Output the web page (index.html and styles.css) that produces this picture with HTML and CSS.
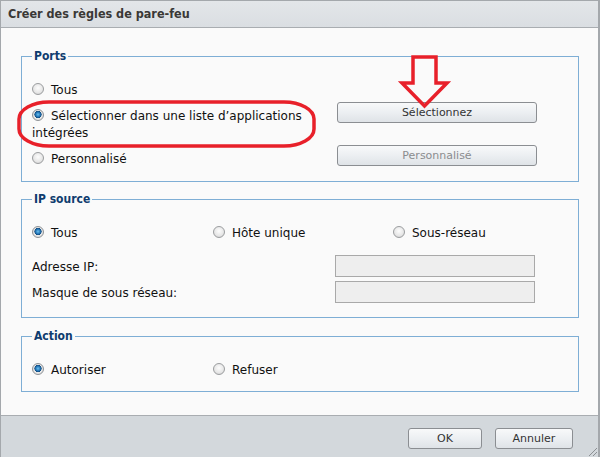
FILE: index.html
```html
<!DOCTYPE html>
<html lang="fr">
<head>
  <meta charset="UTF-8">
  <title>Créer des règles de pare-feu</title>
  <link rel="stylesheet" href="styles.css">
</head>
<body>
  <div class="dialog">
    <div class="titlebar">Créer des règles de pare-feu</div>

    <div class="content">
      <fieldset class="group ports">
        <legend>Ports</legend>
        <div class="row">
          <label class="opt"><span class="radio"></span>Tous</label>
        </div>
        <div class="row split">
          <label class="opt wide"><span class="radio on"></span>Sélectionner dans une liste d’applications intégrées</label>
          <button class="btn wide-btn">Sélectionnez</button>
        </div>
        <div class="row split">
          <label class="opt wide"><span class="radio"></span>Personnalisé</label>
          <button class="btn wide-btn" disabled>Personnalisé</button>
        </div>
      </fieldset>

      <fieldset class="group ipsrc">
        <legend>IP source</legend>
        <div class="row choices">
          <label class="opt"><span class="radio on"></span>Tous</label>
          <label class="opt"><span class="radio"></span>Hôte unique</label>
          <label class="opt"><span class="radio"></span>Sous-réseau</label>
        </div>
        <div class="field first">
          <span class="field-label">Adresse IP:</span>
          <input class="text" type="text" disabled>
        </div>
        <div class="field">
          <span class="field-label">Masque de sous réseau:</span>
          <input class="text" type="text" disabled>
        </div>
      </fieldset>

      <fieldset class="group action">
        <legend>Action</legend>
        <div class="row choices">
          <label class="opt"><span class="radio on"></span>Autoriser</label>
          <label class="opt"><span class="radio"></span>Refuser</label>
        </div>
      </fieldset>
    </div>

    <div class="footer">
      <button class="btn ok">OK</button>
      <button class="btn cancel">Annuler</button>
      <svg class="grip" width="12" height="12" viewBox="0 0 12 12">
        <path d="M11 3 L3 11 M11 7 L7 11" stroke="#8c9094" stroke-width="1" fill="none"/>
      </svg>
    </div>

    <!-- annotations rouges par-dessus la capture -->
    <svg class="marks" width="600" height="457" viewBox="0 0 600 457">
      <rect x="19" y="102" width="295" height="44" rx="30" ry="17" fill="none" stroke="#e8202a" stroke-width="3.5"/>
      <polygon points="413,57 436,57 436,83 447,83 424.5,106 402,83 413,83" fill="none" stroke="#e8202a" stroke-width="3.5" stroke-linejoin="miter"/>
    </svg>
  </div>
</body>
</html>
```

FILE: styles.css
```css
:root {
  --frame: #a4a8ac;
  --bar: #dfe3e6;
  --foot: #d3d8dc;
  --panel: #fafafa;
  --line: #7eaed5;
  --navy: #0f3c6e;
}

body {
  margin: 0;
  font-family: "DejaVu Sans", sans-serif;
  font-size: 12px;
  color: #111;
}

.dialog {
  width: 600px;
  height: 457px;
  box-sizing: border-box;
  border-left: 1px solid var(--frame);
  border-right: 2px solid var(--frame);
  border-top: 1px solid var(--frame);
  display: flex;
  flex-direction: column;
  position: relative;
}

.titlebar {
  height: 26px;
  line-height: 26px;
  padding-left: 7px;
  background: linear-gradient(#e3e6e9, #dadee2);
  border-bottom: 1px solid #a9adb1;
  font-family: "DejaVu Sans Condensed", "DejaVu Sans", sans-serif;
  font-stretch: condensed;
  font-weight: bold;
  font-size: 12.5px;
  color: #3a3836;
}

.content {
  flex: 1;
  background: var(--panel);
  padding-top: 21px;
}

.group {
  margin: 0 19px 0 20px;
  padding: 19px 10px 12px;
  border: 1px solid var(--line);
  min-width: 0;
}

.group + .group { margin-top: 10px; }
.group.action { margin-top: 11px; }
.group.ports { padding-bottom: 13px; }
.group.ipsrc { padding-bottom: 14px; }

.group legend {
  padding: 0 2px;
  line-height: 14px;
  font-family: "DejaVu Sans Condensed", "DejaVu Sans", sans-serif;
  font-stretch: condensed;
  font-weight: bold;
  font-size: 12px;
  color: var(--navy);
}

.row {
  line-height: 17px;
}

.row + .row { margin-top: 9px; }

.split {
  display: flex;
  align-items: flex-start;
}

.opt.wide {
  width: 305px;
  flex: none;
}

.choices {
  display: grid;
  grid-template-columns: 181px 180px auto;
}

.radio {
  display: inline-block;
  width: 10px;
  height: 10px;
  margin-right: 7px;
  vertical-align: -1px;
  border-radius: 50%;
  border: 1px solid #9b9d9f;
  background: radial-gradient(circle at 50% 40%, #fdfdfd 0%, #e6e6e6 60%, #c9c9c9 100%);
}

.radio.on {
  border-color: #8e9296;
  background:
    radial-gradient(circle at 50% 45%, #6cc0ee 0, #2a7fbf 2px, #114c82 3.4px, transparent 3.8px),
    radial-gradient(circle, #fafafa 0%, #e2e2e2 70%, #c8c8c8 100%);
}

.btn {
  height: 21px;
  padding: 0 8px;
  border: 1px solid #8b8e92;
  border-radius: 3px;
  background: linear-gradient(#f8f9fa 0%, #eceff2 50%, #dfe3e7 100%);
  font-family: "DejaVu Sans", sans-serif;
  font-size: 11px;
  color: #333;
}

.btn:disabled { color: #8a8c8e; }

.wide-btn {
  width: 200px;
  margin-top: -6px;
}

.field {
  display: flex;
  align-items: center;
  margin-top: 4px;
}

.field.first { margin-top: 13px; }

.field-label {
  width: 303px;
  padding-top: 2px;
}

.text {
  width: 200px;
  height: 22px;
  box-sizing: border-box;
  margin: 0;
  border: 1px solid #a9a9a9;
  background: #eeeeee;
}

.footer {
  height: 42px;
  border-top: 1px solid #a9adb1;
  background: var(--foot);
  display: flex;
  justify-content: flex-end;
  align-items: flex-start;
  gap: 13px;
  padding: 12px 25px 0 0;
  box-sizing: border-box;
  position: relative;
}

.ok { width: 74px; }
.cancel { width: 78px; }

.grip {
  position: absolute;
  right: 0;
  bottom: 0;
}

.marks {
  position: absolute;
  top: -1px;
  left: -1px;
  pointer-events: none;
}
```
